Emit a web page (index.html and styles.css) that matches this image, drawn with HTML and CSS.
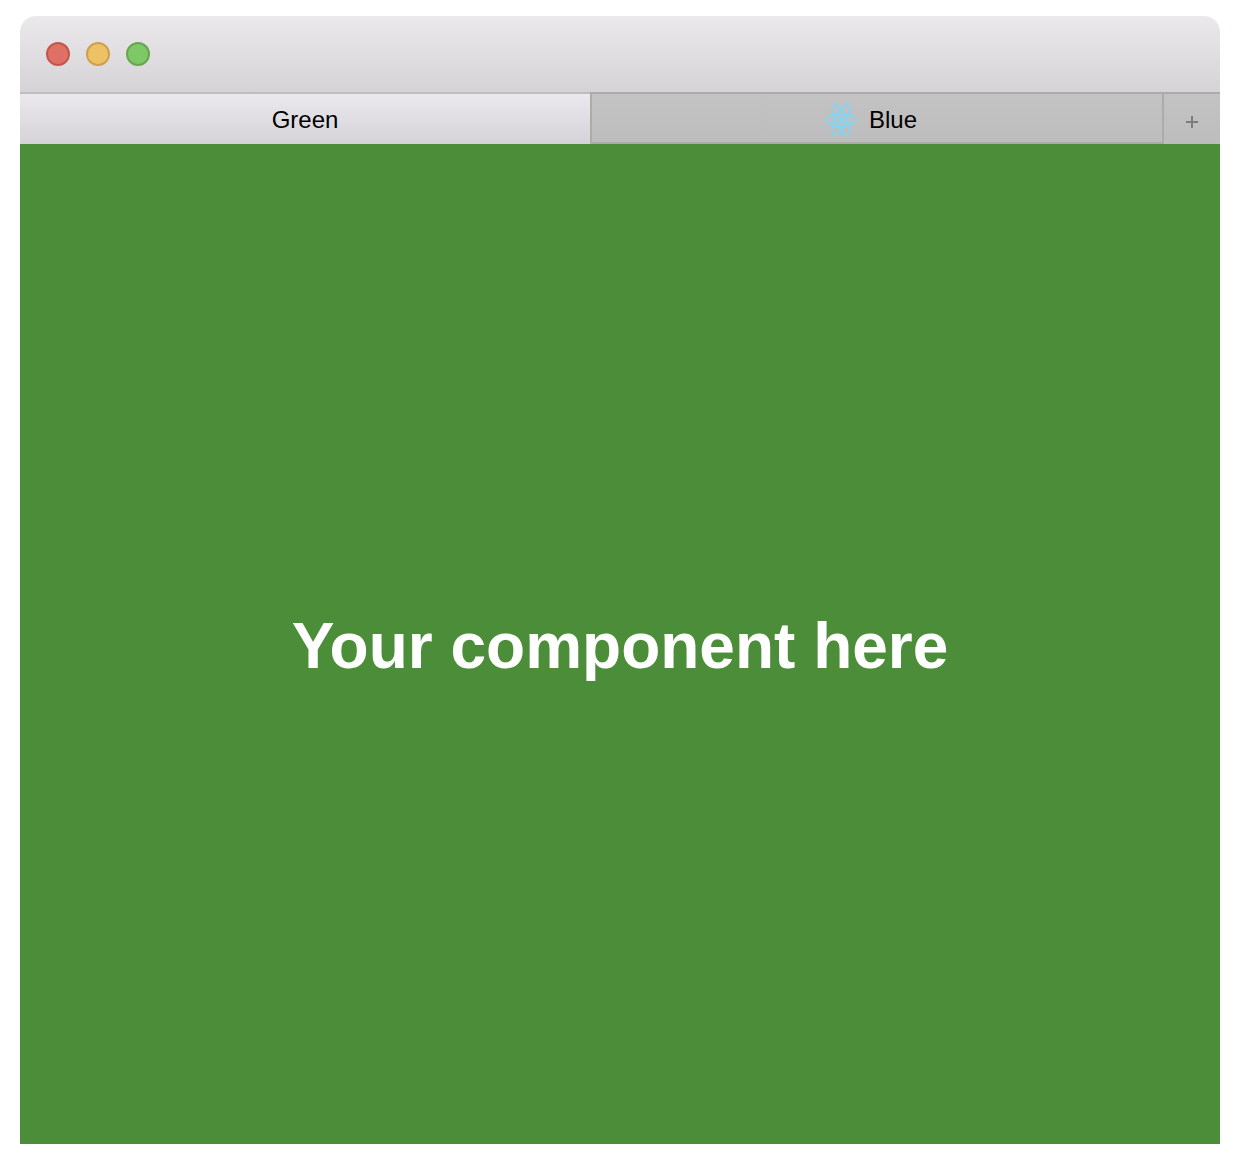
FILE: index.html
```html
<!DOCTYPE html>
<html lang="en">
<head>
  <meta charset="utf-8">
  <meta name="viewport" content="width=device-width, initial-scale=1">
  <title>Green</title>
  <link rel="stylesheet" href="styles.css">
</head>
<body>
  <div class="window">
    <header class="titlebar">
      <button class="control control-close" type="button" aria-label="Close"></button>
      <button class="control control-minimize" type="button" aria-label="Minimize"></button>
      <button class="control control-zoom" type="button" aria-label="Zoom"></button>
    </header>
    <nav class="tabs" aria-label="Tabs">
      <button class="tab tab-active" type="button">Green</button>
      <button class="tab tab-inactive" type="button">
        <svg class="tab-icon" viewBox="0 0 32 28" preserveAspectRatio="none" fill="none" stroke="#7fd6f5" stroke-width="1.5" aria-hidden="true">
          <circle cx="16" cy="14" r="2.8" fill="#7fd6f5" stroke="none"/>
          <ellipse cx="16" cy="14" rx="15" ry="5.6"/>
          <ellipse cx="16" cy="14" rx="15" ry="5.6" transform="rotate(60 16 14)"/>
          <ellipse cx="16" cy="14" rx="15" ry="5.6" transform="rotate(120 16 14)"/>
        </svg>
        <span>Blue</span>
      </button>
      <button class="tab-add" type="button" aria-label="New tab">
        <svg class="add-icon" viewBox="0 0 12 12" stroke="#7d7d7d" stroke-width="2" aria-hidden="true">
          <path d="M6 0v12M0 6h12"/>
        </svg>
      </button>
    </nav>
    <main class="content">
      <h1 class="headline">Your component here</h1>
    </main>
  </div>
</body>
</html>
```
FILE: styles.css
```css
* {
  box-sizing: border-box;
}

body {
  margin: 0;
  min-height: 100vh;
  padding: 16px 24px 26px 20px;
  display: flex;
  background: #fff;
  font-family: "Liberation Sans", Arial, Helvetica, sans-serif;
}

button {
  margin: 0;
  padding: 0;
  border: 0;
  font: inherit;
  color: inherit;
}

.window {
  flex: 1;
  display: flex;
  flex-direction: column;
  border-radius: 16px 16px 0 0;
  overflow: hidden;
}

.titlebar {
  height: 76px;
  padding: 0 26px;
  display: flex;
  align-items: center;
  gap: 16px;
  background: linear-gradient(#ebe9ec, #d5d3d6);
}

.control {
  width: 24px;
  height: 24px;
  border: 2px solid;
  border-radius: 50%;
}

.control-close {
  background: #df7065;
  border-color: #c4574b;
}

.control-minimize {
  background: #eec264;
  border-color: #cda04c;
}

.control-zoom {
  background: #7fc867;
  border-color: #66a64e;
}

.tabs {
  display: flex;
  height: 52px;
  font-size: 24px;
  line-height: 28px;
  color: #000;
}

.tab {
  flex: 1 1 12px;
  display: flex;
  align-items: center;
  justify-content: center;
  gap: 12px;
}

.tab-active {
  padding-top: 2px;
  background: linear-gradient(#ebe9ed, #d5d3d7);
  border-top: 2px solid #bebdc0;
}

.tab-inactive {
  flex-basis: 16px;
  padding: 4px 12px 0 0;
  background: linear-gradient(#c3c3c4, #bdbdbd);
  border: 2px solid #acacad;
}

.tab-icon {
  width: 32px;
  height: 32px;
}

.tab-add {
  flex: 0 0 56px;
  display: flex;
  align-items: center;
  justify-content: center;
  padding-top: 6px;
  background: linear-gradient(#c3c3c4, #bdbdbd);
  border-top: 2px solid #acacad;
}

.add-icon {
  width: 12px;
  height: 12px;
}

.content {
  flex: 1;
  display: flex;
  align-items: center;
  justify-content: center;
  padding-top: 4px;
  background: #4b8d38;
  color: #fff;
}

.headline {
  margin: 0;
  font-size: 64px;
  line-height: 72px;
  text-align: center;
}
```
